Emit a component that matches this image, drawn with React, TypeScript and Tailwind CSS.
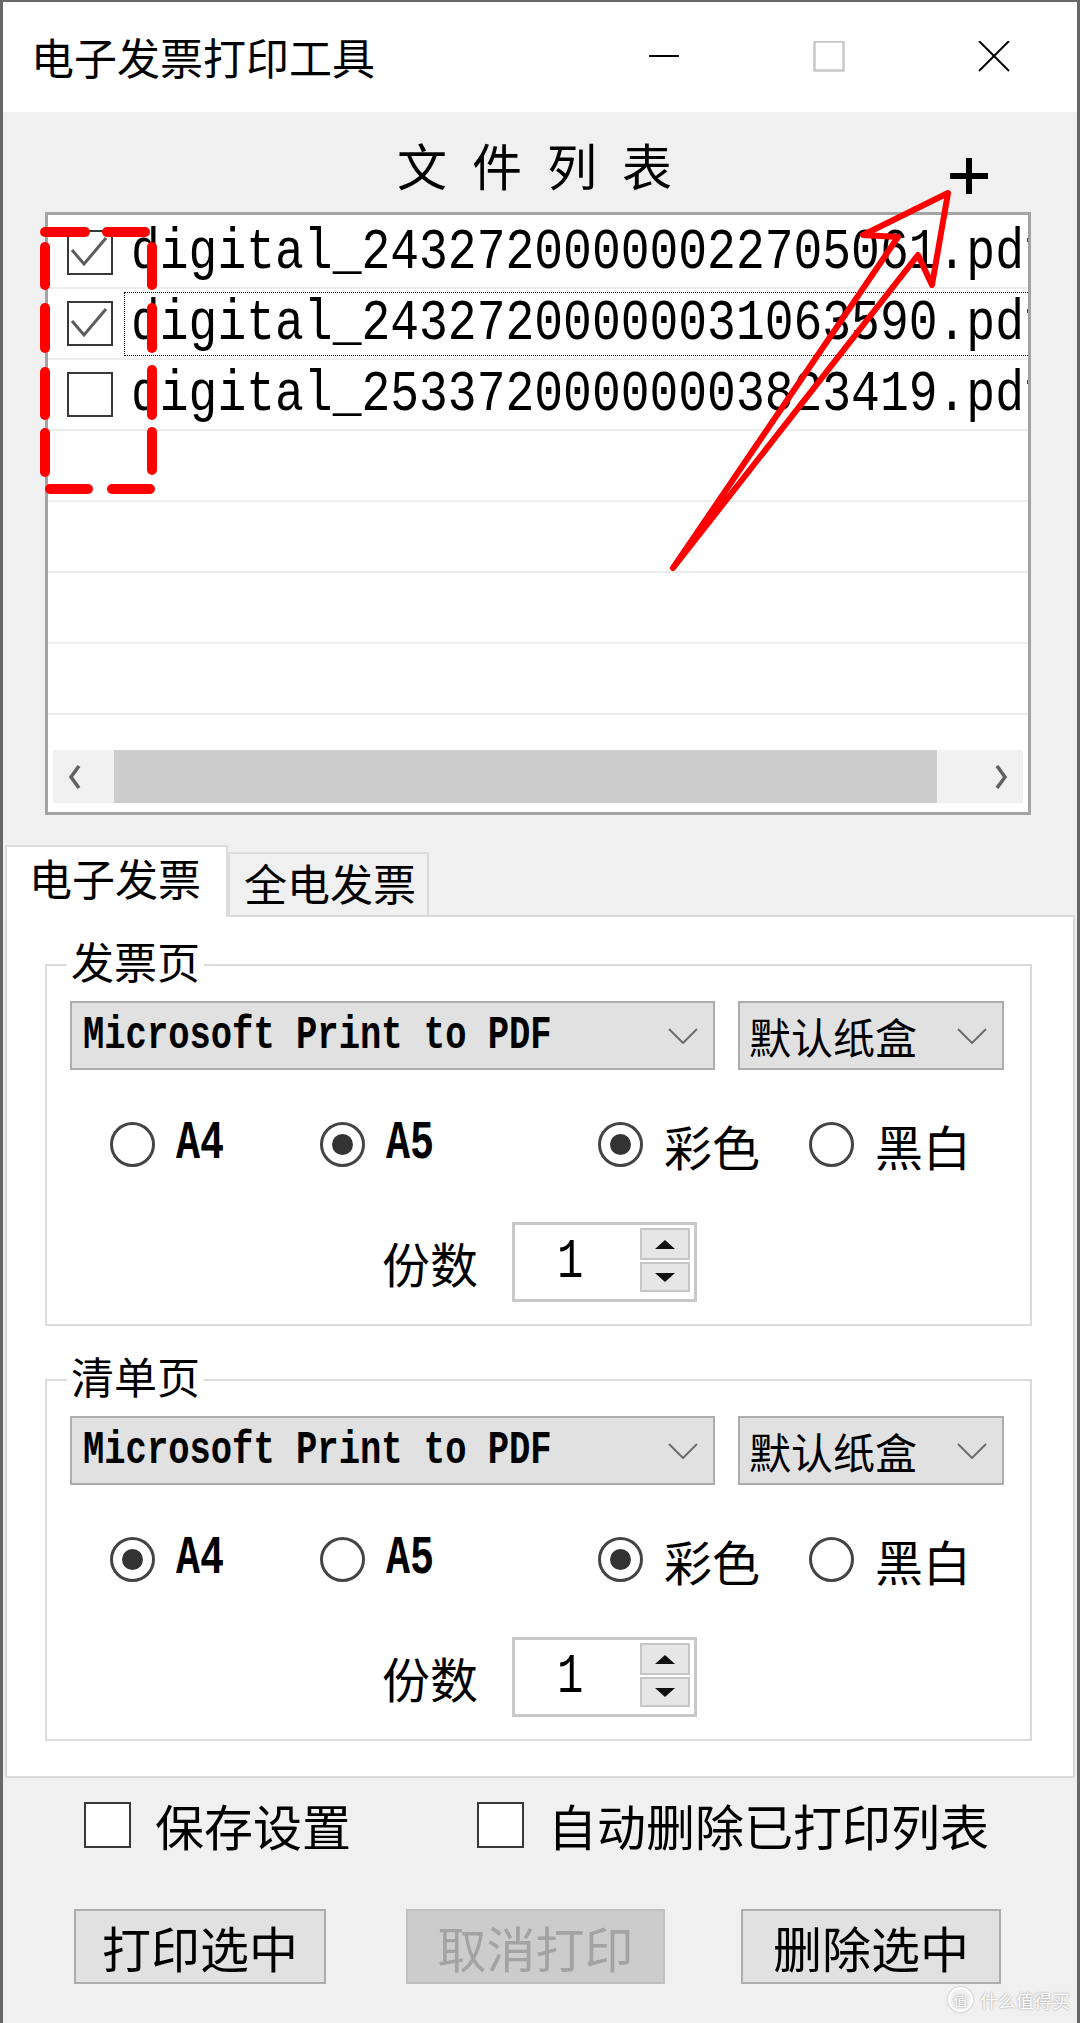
import React from "react";

const files = [
  { name: "digital_24327200000022705061.pdf", checked: true, focus: false },
  { name: "digital_24327200000031063590.pdf", checked: true, focus: true },
  { name: "digital_25337200000003823419.pdf", checked: false, focus: false },
];

function CheckBox({ checked, className }: { checked?: boolean; className?: string }) {
  return (
    <div className={"shrink-0 w-[46px] h-[45px] border-2 border-[#383838] bg-white " + (className ?? "")}>
      {checked && (
        <svg width="42" height="41" viewBox="0 0 42 41">
          <polyline points="3,18 15,32 37,6" fill="none" stroke="#5c5c5c" strokeWidth="3" />
        </svg>
      )}
    </div>
  );
}

function Radio({ on }: { on?: boolean }) {
  return (
    <div className="shrink-0 w-[45px] h-[45px] rounded-full border-[3px] border-[#444] bg-white flex items-center justify-center">
      {on && <div className="w-[21px] h-[21px] rounded-full bg-[#333]" />}
    </div>
  );
}

function Chevron() {
  return (
    <svg width="30" height="16" viewBox="0 0 30 16" className="ml-auto shrink-0">
      <polyline points="1,1 15,15 29,1" fill="none" stroke="#6d6d6d" strokeWidth="2" />
    </svg>
  );
}

function Combo({ text, mono, width }: { text: string; mono?: boolean; width: string }) {
  return (
    <div className={"h-[69px] bg-[#e1e1e1] border-2 border-[#adadad] flex items-center pr-[15px] " + width + (mono ? " pl-[11px]" : " pl-[9px]")}>
      {mono ? (
        <span className="inline-block scale-y-[1.3] font-['Liberation_Mono',monospace] font-bold text-[35.5px] leading-[36px] whitespace-pre">
          {text}
        </span>
      ) : (
        <span className="text-[42px] leading-[44px]">{text}</span>
      )}
      <Chevron />
    </div>
  );
}

function RadioItem({ on, label, mono, width }: { on?: boolean; label: string; mono?: boolean; width: string }) {
  return (
    <div className={"flex items-center gap-[21px] " + width}>
      <Radio on={on} />
      {mono ? (
        <span className="inline-block scale-y-[1.33] font-['Liberation_Mono',monospace] font-bold text-[40px] leading-[40px]">
          {label}
        </span>
      ) : (
        <span className="text-[48px] leading-[50px]">{label}</span>
      )}
    </div>
  );
}

function GroupBox({ title, a4, className }: { title: string; a4: boolean; className: string }) {
  return (
    <div className={"relative ml-[38px] w-[987px] h-[362px] border-2 border-[#dcdcdc] pt-[35px] pl-[23px] " + className}>
      <span className="absolute left-[20px] -top-[27px] bg-white px-[4px] text-[43px] leading-[42px]">{title}</span>
      <div className="flex gap-[23px]">
        <Combo text="Microsoft Print to PDF" mono width="w-[645px]" />
        <Combo text="默认纸盒" width="w-[266px]" />
      </div>
      <div className="mt-[52px] h-[45px] flex items-center pl-[40px]">
        <RadioItem on={a4} label="A4" mono width="w-[210px]" />
        <RadioItem on={!a4} label="A5" mono width="w-[278px]" />
        <RadioItem on label="彩色" width="w-[211px]" />
        <RadioItem label="黑白" width="w-[170px]" />
      </div>
      <div className="mt-[55px] h-[80px] flex items-center">
        <span className="ml-[312px] text-[48px] leading-[50px]">份数</span>
        <div className="ml-[34px] w-[185px] h-[80px] border-[3px] border-[#c8c8c8] bg-white flex items-stretch">
          <div className="flex-1 flex items-center pl-[42px]">
            <span className="inline-block scale-y-[1.27] font-['Liberation_Mono',monospace] text-[44px] leading-[44px]">1</span>
          </div>
          <div className="w-[50px] mr-[4px] py-[3px] flex flex-col gap-[2px]">
            <div className="h-[32px] bg-[#e6e6e6] border-2 border-[#c6c6c6] flex items-center justify-center">
              <svg width="20" height="9" viewBox="0 0 20 9"><polygon points="10,0 20,9 0,9" fill="#111" /></svg>
            </div>
            <div className="h-[30px] bg-[#e6e6e6] border-2 border-[#c6c6c6] flex items-center justify-center">
              <svg width="20" height="9" viewBox="0 0 20 9"><polygon points="0,0 20,0 10,9" fill="#111" /></svg>
            </div>
          </div>
        </div>
      </div>
    </div>
  );
}

export default function App() {
  const rows = [...files, null, null, null, null, null];

  return (
    <div className="relative w-[1080px] h-[2023px] overflow-hidden bg-[#f0f0f0] border-x-[3px] border-t-2 border-[#666] font-['Noto_Sans_CJK_SC',sans-serif] text-black">
      {/* title bar */}
      <div className="h-[110px] bg-white flex items-center">
        <div className="pl-[28px] text-[43px] leading-[48px] -mt-[3px]">电子发票打印工具</div>
        <div className="ml-auto flex pr-[1px]">
          <div className="w-[165px] h-[110px] flex items-center justify-center">
            <svg width="32" height="32" viewBox="0 0 32 32"><line x1="1" y1="15" x2="31" y2="15" stroke="#000" strokeWidth="2" /></svg>
          </div>
          <div className="w-[165px] h-[110px] flex items-center justify-center">
            <svg width="32" height="32" viewBox="0 0 32 32"><rect x="1.5" y="0.5" width="29" height="29" fill="none" stroke="#c8c8c8" strokeWidth="2.5" /></svg>
          </div>
          <div className="w-[165px] h-[110px] flex items-center justify-center">
            <svg width="32" height="32" viewBox="0 0 32 32">
              <line x1="1" y1="0" x2="31" y2="30" stroke="#000" strokeWidth="2" />
              <line x1="31" y1="0" x2="1" y2="30" stroke="#000" strokeWidth="2" />
            </svg>
          </div>
        </div>
      </div>

      {/* file list header */}
      <div className="h-[100px] flex items-start">
        <div className="ml-[394px] mt-[27px] text-[50px] leading-[50px] tracking-[25px] whitespace-nowrap">文件列表</div>
        <svg width="38" height="36" viewBox="0 0 38 36" className="ml-[253px] mt-[46px]">
          <line x1="0" y1="18" x2="38" y2="18" stroke="#000" strokeWidth="6" />
          <line x1="19" y1="0" x2="19" y2="36" stroke="#000" strokeWidth="6" />
        </svg>
      </div>

      {/* file list */}
      <div className="ml-[42px] w-[986px] h-[603px] border-[3px] border-[#a3a3a3] bg-white flex flex-col">
        <div className="h-[535px] overflow-hidden pt-[3px]">
          {rows.map((f, i) => (
            <div key={i} className="h-[71px] border-b-2 border-[#ededed] flex items-center">
              {f && (
                <>
                  <CheckBox checked={f.checked} className="ml-[19px]" />
                  <div
                    className={
                      "ml-[11px] h-[64px] w-[960px] shrink-0 pl-[6px] flex items-center border " +
                      (f.focus ? "border-dotted border-black" : "border-transparent")
                    }
                  >
                    <span className="inline-block scale-y-[1.18] font-['Liberation_Mono',monospace] text-[48px] leading-[48px] whitespace-nowrap">
                      {f.name}
                    </span>
                  </div>
                </>
              )}
            </div>
          ))}
        </div>
        <div className="h-[53px] mx-[5px] bg-[#f0f0f0] flex items-center">
          <svg width="16" height="26" viewBox="0 0 16 26" className="ml-[14px] shrink-0">
            <polyline points="12,2 4,13 12,24" fill="none" stroke="#606060" strokeWidth="3.5" />
          </svg>
          <div className="ml-[31px] w-[823px] h-full bg-[#cdcdcd]" />
          <svg width="16" height="26" viewBox="0 0 16 26" className="ml-auto mr-[14px] shrink-0">
            <polyline points="4,2 12,13 4,24" fill="none" stroke="#606060" strokeWidth="3.5" />
          </svg>
        </div>
      </div>

      {/* tabs */}
      <div className="mt-[30px] ml-[2px] flex items-end">
        <div className="relative z-10 w-[223px] h-[72px] -mb-[2px] bg-white border-2 border-b-0 border-[#dcdcdc] pl-[22px] pt-[9px] text-[43px] leading-[43px]">
          电子发票
        </div>
        <div className="w-[201px] h-[63px] bg-[#f0f0f0] border-2 border-b-0 border-[#dadada] pl-[14px] pt-[7px] text-[43px] leading-[43px]">
          全电发票
        </div>
      </div>
      <div className="ml-[2px] w-[1070px] h-[863px] bg-white border-2 border-[#dadada]">
        <GroupBox title="发票页" a4={false} className="mt-[47px]" />
        <GroupBox title="清单页" a4 className="mt-[53px]" />
      </div>

      {/* options */}
      <div className="mt-[24px] h-[46px] flex items-center">
        <div className="ml-[81px] w-[47px] h-[46px] border-2 border-[#383838] bg-white" />
        <span className="ml-[24px] text-[49px] leading-[50px]">保存设置</span>
        <div className="ml-[126px] w-[47px] h-[46px] border-2 border-[#383838] bg-white" />
        <span className="ml-[24px] text-[49px] leading-[50px]">自动删除已打印列表</span>
      </div>

      {/* buttons */}
      <div className="mt-[61px] flex">
        <div className="ml-[71px] w-[252px] h-[75px] bg-[#e1e1e1] border-2 border-[#adadad] flex items-center justify-center text-[49px] leading-[50px]">
          打印选中
        </div>
        <div className="ml-[80px] w-[259px] h-[75px] bg-[#cccccc] border-2 border-[#bfbfbf] flex items-center justify-center text-[49px] leading-[50px] text-[#a3a3a3]">
          取消打印
        </div>
        <div className="ml-[76px] w-[260px] h-[75px] bg-[#e1e1e1] border-2 border-[#adadad] flex items-center justify-center text-[49px] leading-[50px]">
          删除选中
        </div>
      </div>

      {/* watermark */}
      <div className="absolute right-[7px] bottom-[11px] flex items-center gap-[7px] text-white [text-shadow:0_0_2px_rgba(0,0,0,0.45)]">
        <div className="w-[25px] h-[25px] rounded-full border-2 border-white shadow-[0_0_2px_rgba(0,0,0,0.4)] flex items-center justify-center text-[14px] leading-[14px]">
          值
        </div>
        <span className="text-[18px] leading-[20px]">什么值得买</span>
      </div>

      {/* red annotations */}
      <svg
        width="1080"
        height="2023"
        viewBox="0 0 1080 2023"
        className="absolute -left-[3px] -top-[2px] pointer-events-none"
      >
        <g stroke="#ff0000" strokeWidth="10" strokeLinecap="round" fill="none">
          <line x1="45" y1="232" x2="85" y2="232" />
          <line x1="107" y1="232" x2="145" y2="232" />
          <line x1="45" y1="247" x2="45" y2="285" />
          <line x1="45" y1="308" x2="45" y2="348" />
          <line x1="45" y1="372" x2="45" y2="415" />
          <line x1="45" y1="433" x2="45" y2="472" />
          <line x1="152" y1="247" x2="152" y2="285" />
          <line x1="152" y1="308" x2="152" y2="348" />
          <line x1="152" y1="370" x2="152" y2="415" />
          <line x1="152" y1="432" x2="152" y2="470" />
          <line x1="50" y1="489" x2="88" y2="489" />
          <line x1="112" y1="489" x2="150" y2="489" />
        </g>
        <polygon
          points="948,193 863,235 898,237 673,568 918,255 932,285"
          fill="none"
          stroke="#ff0000"
          strokeWidth="6"
          strokeLinejoin="round"
        />
      </svg>
    </div>
  );
}
